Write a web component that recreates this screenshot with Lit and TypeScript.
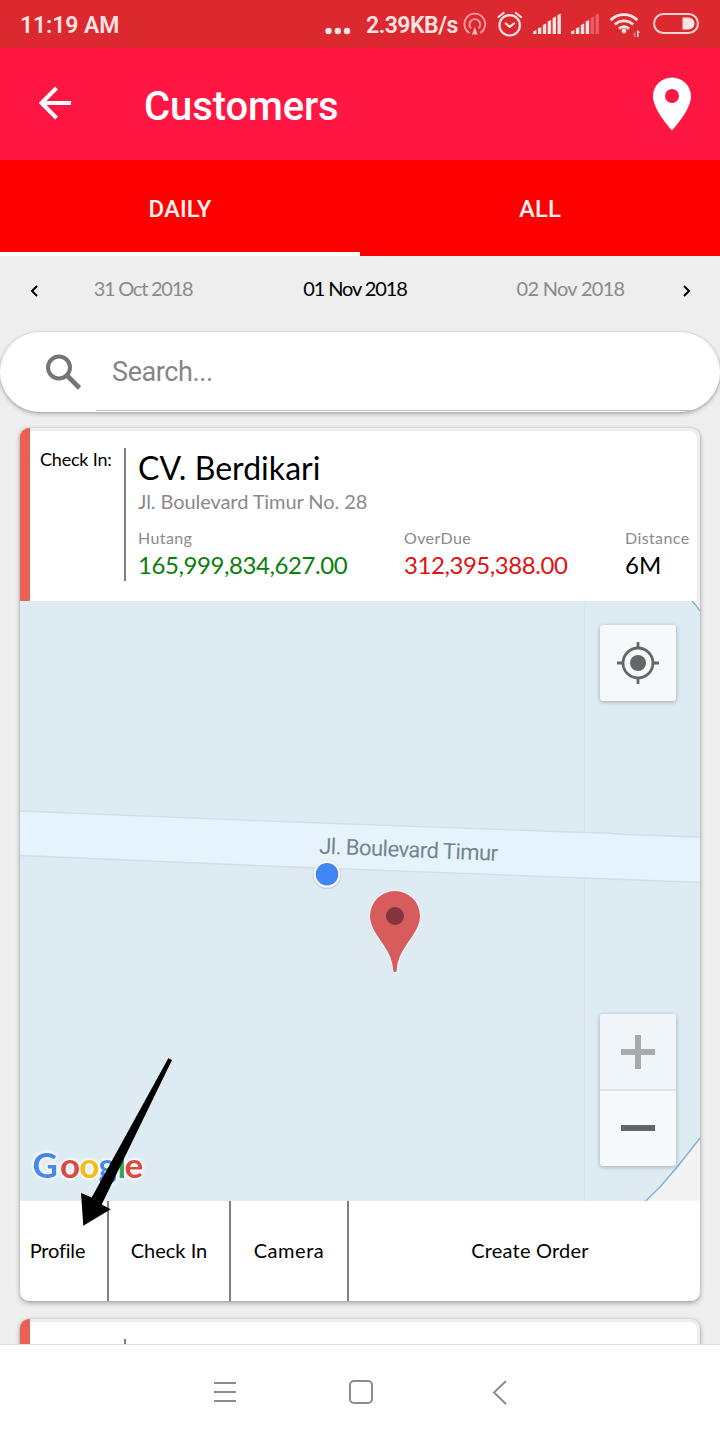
import { LitElement, html, svg, css } from "lit";
import { customElement, property } from "lit/decorators.js";

@customElement("status-bar")
class StatusBar extends LitElement {
  static styles = css`
    :host { display: block; height: 48px; background: #dc282f; color: #ffe3e3; font: 500 23px/52px Roboto, sans-serif; }
    .bar { display: flex; justify-content: space-between; height: 48px; }
    .time { padding-left: 20px; font-weight: 600; letter-spacing: -0.1px; }
    .right { display: flex; }
    .speed { font-weight: 600; width: 97px; white-space: nowrap; letter-spacing: -0.5px; }
    svg { display: block; }
  `;
  render() {
    const bars = (x: number, dim: number) =>
      [0, 1, 2, 3, 4, 5].map((i) => {
        const h = [3.5, 6.5, 10, 13.5, 17, 20][i];
        return svg`<path d=${`M${x + i * 4.9} 34v${-h + 1}l3.4-1.6v${h + 0.6}z`} opacity=${i >= dim ? 0.3 : 1}></path>`;
      });
    return html`<div class="bar">
      <span class="time">11:19 AM</span>
      <div class="right">
        <svg width="42" height="48" fill="#ffe9e9"><circle cx="4.5" cy="31" r="3.2"/><circle cx="13.8" cy="31" r="3.2"/><circle cx="23" cy="31" r="3.2"/></svg>
        <span class="speed">2.39KB/s</span>
        <svg width="257" height="48" viewBox="463 0 257 48" fill="#ffe3e3">
          <g fill="none" stroke="#ff9a9e" stroke-width="1.9">
            <path d="M469.5 33a10.4 10.4 0 1 1 10.6 0"/><path d="M471 28.4a5.4 5.4 0 1 1 7.6 0"/>
          </g>
          <path d="M474.8 27l2.800 7.500h-5.600z" fill="#ffc0c2"/>
          <g fill="none" stroke="#ffe3e3" stroke-width="2.2" stroke-linecap="round" stroke-linejoin="round">
            <circle cx="509.7" cy="25.3" r="10.2"/>
            <path d="M505.8 23.500l4 3.400 4.200-3.400M498.500 17l5-4M516 13l5 4"/>
          </g>
          ${bars(533, 9)}${bars(571, 4)}
          <g fill="none" stroke="#ffe3e3" stroke-width="2.8">
            <path d="M610.6 20.2a19 19 0 0 1 26.8 0"/><path d="M614.8 24.6a13 13 0 0 1 18.4 0"/><path d="M619 28.8a7 7 0 0 1 10 0"/>
          </g>
          <circle cx="624" cy="31" r="2.4"/>
          <path d="M637 30v7h1.5v-4.5h2z"/><path d="M635.5 37v-6l-2.5 4h1v2z" opacity=".45"/>
          <rect x="654" y="14" width="44" height="19" rx="9.5" fill="none" stroke="#ffd3d3" stroke-width="2"/>
          <path d="M682.500 17.500h6a6 6 0 0 1 6 6 6 6 0 0 1-6 6h-6z"/>
        </svg>
      </div>
    </div>`;
  }
}

@customElement("app-header")
class AppHeader extends LitElement {
  static styles = css`
    :host { display: block; font-family: Roboto, sans-serif; color: #fff; }
    .top { display: flex; height: 112px; background: #ff1744; }
    h1 { flex: 1; margin: 0; padding-top: 3px; font-size: 40px; font-weight: 500; line-height: 112px; letter-spacing: -0.1px; }
    svg { display: block; }
    .tabs { display: grid; grid-template-columns: 1fr 1fr; background: #f00; }
    .tab { box-sizing: border-box; height: 96px; font-size: 24px; font-weight: 500; line-height: 98px; text-align: center; color: #fff0f0; border-bottom: 4px solid transparent; }
    .on { border-bottom-color: #fff; }
  `;
  render() {
    return html`<div class="top">
        <svg width="144" height="112" fill="none" stroke="#fff" stroke-width="4"><path d="M71 55H42M56.5 40L41.5 55l15 15"/></svg>
        <h1>Customers</h1>
        <svg width="76" height="112" viewBox="644 48 76 112" fill="#fff"><path fill-rule="evenodd" d="M672 77.5c-10.6 0-19 8.3-19 18.8 0 14 19 34.2 19 34.2s19-20.2 19-34.2c0-10.5-8.4-18.8-19-18.8zm0 11.5a7 7 0 1 1 0 14 7 7 0 0 1 0-14z"/></svg>
      </div>
      <div class="tabs"><div class="tab on">DAILY</div><div class="tab">ALL</div></div>`;
  }
}

@customElement("date-picker-row")
class DatePickerRow extends LitElement {
  static styles = css`
    :host { display: block; font: 20px/24px Lato, sans-serif; color: #8a8a8a; }
    .row { display: grid; grid-template-columns: 37px 212px 212px 219px 40px; height: 76px; padding-top: 20px; box-sizing: border-box; }
    .row > * { text-align: center; }
    .prev { letter-spacing: -1.25px; }
    .now { color: #000; letter-spacing: -1.1px; }
    .next { letter-spacing: -0.7px; }
    svg { display: block; }
  `;
  render() {
    return html`<div class="row">
      <svg width="44" height="28" fill="none" stroke="#000" stroke-width="2"><path d="M37 10l-5 5 5 5"/></svg>
      <span class="prev">31 Oct 2018</span><span class="now">01 Nov 2018</span><span class="next">02 Nov 2018</span>
      <svg width="40" height="28" fill="none" stroke="#000" stroke-width="2"><path d="M4 10l5 5-5 5"/></svg>
    </div>`;
  }
}

@customElement("search-field")
class SearchField extends LitElement {
  static styles = css`
    :host { display: block; }
    .box { display: flex; height: 80px; border-radius: 40px; background: #fff; overflow: hidden; }
    .shade { border-radius: 40px; box-shadow: 0 2px 4px rgba(0,0,0,.28), 0 0 2px rgba(0,0,0,.2); }
    .text { flex: 1; box-sizing: border-box; height: 79px; padding-left: 16px; border-bottom: 1.5px solid #bdbdbd; font: 27px/81px Roboto, sans-serif; letter-spacing: -0.4px; color: #858585; }
    svg { display: block; }
  `;
  render() {
    return html`<div class="shade"><div class="box">
      <svg width="96" height="80" fill="none" stroke="#757575"><circle cx="59" cy="35.500" r="11" stroke-width="4"/><path d="M67 43.500l12.500 12.500" stroke-width="4.600"/></svg>
      <div class="text">Search...</div>
    </div></div>`;
  }
}

@customElement("mini-map")
class MiniMap extends LitElement {
  static styles = css`
    :host { display: block; position: relative; height: 600px; }
    svg { display: block; }
    .btn { position: absolute; right: 24px; width: 76px; border-radius: 3px; background: #f5f9fc; box-shadow: 0 1px 4px rgba(0,0,0,.28); overflow: hidden; }
    .locate { top: 24px; }
    .zoom { bottom: 35px; }
    .in { background: #eff5f9; border-bottom: 2px solid #dbe3e7; }
    .road { font: 22px Roboto, sans-serif; fill: #72858f; }
    .logo { font: 700 35px Lato, sans-serif; filter: drop-shadow(0 0 1.5px #f5fafd) drop-shadow(0 0 1.5px #f5fafd) drop-shadow(0 0 1px #f5fafd); }
  `;
  render() {
    return html`
      <svg width="680" height="600">
        <rect width="680" height="600" fill="#deebf3"/>
        <path d="M564.5 0v600" stroke="#d3e1ea"/>
        <path d="M0 210L260 220.5 564 231.500 585 232 605 233.500 680 236V281.500L564 277 260 265.500 0 254.500z" fill="#e6f3fc"/>
        <path d="M0 210L260 220.500 564 231.500 585 232 605 233.500 680 236M680 281.500L564 277 260 265.500 0 254.500" fill="none" stroke="#d0dee6" stroke-width="1.3"/>
        <path d="M672 0q4 4 8 10V0z" fill="#eef2f4"/>
        <path d="M672 0q4 4 8 10" fill="none" stroke="#86b1d8" stroke-width="1.5"/>
        <path d="M625.700 600L640 586 658 565 680 537V600z" fill="#f3f3f3"/>
        <path d="M625.700 600L640 586 658 565 680 537" fill="none" stroke="#86b1d8" stroke-width="1.5"/>
        <text class="road" x="299" y="252.500" textLength="179" transform="rotate(2.3 299 252)">Jl. Boulevard Timur</text>
        <circle cx="307" cy="274" r="14.300" fill="#c5d3dc"/>
        <circle cx="307" cy="273.300" r="13.300" fill="#fff"/><circle cx="307" cy="273.300" r="11.300" fill="#4285f4"/>
        <path d="M375 290a25 25 0 0 0-25 25c0 19 22.500 31 23.200 54.500a1.800 1.800 0 0 0 3.600 0C377.500 346 400 334 400 315a25 25 0 0 0-25-25z" fill="#d75c5b" stroke="#eef4f8" stroke-width="2.400" paint-order="stroke"/>
        <circle cx="375" cy="315" r="9" fill="#82363b"/>
        <text class="logo" y="577" x="12.500 40 59.300 78.500 97.500 104.500"><tspan fill="#4a86e8">G</tspan><tspan fill="#dc4a3e">o</tspan><tspan fill="#f3bd17">o</tspan><tspan fill="#4a86e8">g</tspan><tspan fill="#3aa757">l</tspan><tspan fill="#dc4a3e">e</tspan></text>
      </svg>
      <div class="btn locate">
        <svg width="76" height="76" fill="none" stroke="#666" stroke-width="2.800"><circle cx="38" cy="38" r="15"/><circle cx="38" cy="38" r="8" fill="#666" stroke="none"/><path d="M38 17v6M38 53v6M17 38h6M53 38h6"/></svg>
      </div>
      <div class="btn zoom">
        <svg class="in" width="76" height="75" stroke="#a7abae" stroke-width="6"><path d="M21 38h34M38 21v34"/></svg>
        <svg width="76" height="75" stroke="#666" stroke-width="6"><path d="M21 37h34"/></svg>
      </div>`;
  }
}

@customElement("customer-card")
class CustomerCard extends LitElement {
  @property({ type: Boolean }) partial = false;
  static styles = css`
    :host { display: block; position: relative; font-family: Lato, sans-serif; color: #000; }
    .card { border-radius: 9px; background: #eee; box-shadow: 0 2px 5px rgba(0,0,0,.32), 0 0 2px rgba(0,0,0,.15); overflow: hidden; }
    .head { box-sizing: border-box; height: 173px; border-left: 10px solid #e96054; padding: 3px 3px 0 0; }
    .info { display: flex; height: 170px; box-sizing: border-box; padding-top: 17px; background: #fff; border-top-right-radius: 8px; }
    .check { box-sizing: border-box; width: 96px; height: 133px; padding-left: 10px; border-right: 2px solid #808080; font-size: 18px; line-height: 23px; white-space: nowrap; letter-spacing: -0.2px; }
    .main { flex: 1; padding-left: 12px; }
    .name { font-size: 32px; line-height: 40px; letter-spacing: 0.05px; }
    .addr { font-size: 20px; line-height: 26px; padding-bottom: 2px; color: #8a8a8a; letter-spacing: -0.08px; }
    .nums { display: grid; grid-template-columns: 266px 221px 1fr; padding-top: 11px; }
    .label { font-size: 16px; line-height: 22px; color: #8a8a8a; letter-spacing: 0.4px; }
    .val { font-size: 24px; line-height: 32px; white-space: nowrap; }
    .debt { color: #0a800a; letter-spacing: -0.42px; }
    .due { color: #e11212; letter-spacing: -0.45px; }
    .actions { display: flex; height: 100px; background: #fff; font-size: 20px; line-height: 98px; }
    .actions span { box-sizing: border-box; text-align: center; border-right: 2px solid #808080; white-space: nowrap; }
    .a1 { width: 89px; padding-right: 12px; letter-spacing: -0.2px; }
    .a2 { width: 122px; }
    .a3 { width: 118px; letter-spacing: 0.55px; }
    .actions .a4 { flex: 1; padding-left: 11px; border: 0; letter-spacing: 0.2px; }
    .arrow { position: absolute; left: 60px; top: 628px; }
  `;
  render() {
    if (this.partial) {
      return html`<div class="card"><div class="head"><div class="info"><div class="check"></div></div></div></div>`;
    }
    return html`<div class="card">
        <div class="head"><div class="info">
          <div class="check">Check In:</div>
          <div class="main">
            <div class="name">CV. Berdikari</div>
            <div class="addr">Jl. Boulevard Timur No. 28</div>
            <div class="nums">
              <div><div class="label">Hutang</div><div class="val debt">165,999,834,627.00</div></div>
              <div><div class="label">OverDue</div><div class="val due">312,395,388.00</div></div>
              <div><div class="label">Distance</div><div class="val">6M</div></div>
            </div>
          </div>
        </div></div>
        <mini-map></mini-map>
        <div class="actions"><span class="a1">Profile</span><span class="a2">Check In</span><span class="a3">Camera</span><span class="a4">Create Order</span></div>
      </div>
      <svg class="arrow" width="94" height="172" viewBox="80 1056 94 172"><path d="M168.300 1058.300L172 1060 101.700 1204.500 110.700 1209.300 83.300 1225.700 81 1193 91.700 1197.500z"/></svg>`;
  }
}

@customElement("nav-bar")
class NavBar extends LitElement {
  static styles = css`
    :host { display: block; box-sizing: border-box; height: 96px; background: #fff; border-top: 1px solid #e0e0e0; }
    svg { display: block; }
  `;
  render() {
    return html`<svg width="720" height="95" viewBox="0 1345 720 95" fill="none" stroke="#8c8c8c" stroke-width="2">
      <path d="M214 1383h22M214 1392h22M214 1401h22M506 1381l-12 11.500 12 11.500"/>
      <rect x="350" y="1381" width="22" height="22" rx="4"/>
    </svg>`;
  }
}

@customElement("app-root")
class AppRoot extends LitElement {
  static styles = css`
    :host { display: flex; flex-direction: column; height: 1440px; background: #eee; overflow: hidden; }
    .list { flex: 1; min-height: 0; overflow: hidden; display: flex; flex-direction: column; gap: 18px; padding: 16px 20px 0; }
    .list > * { flex: none; }
    .scroll { flex: 1; min-height: 0; display: flex; flex-direction: column; overflow: hidden; }
    .scroll > search-field { position: relative; }
  `;
  render() {
    return html`
      <status-bar></status-bar>
      <app-header></app-header>
      <div class="scroll">
        <date-picker-row></date-picker-row>
        <search-field></search-field>
        <div class="list">
          <customer-card></customer-card>
          <customer-card partial></customer-card>
        </div>
      </div>
      <nav-bar></nav-bar>`;
  }
}
